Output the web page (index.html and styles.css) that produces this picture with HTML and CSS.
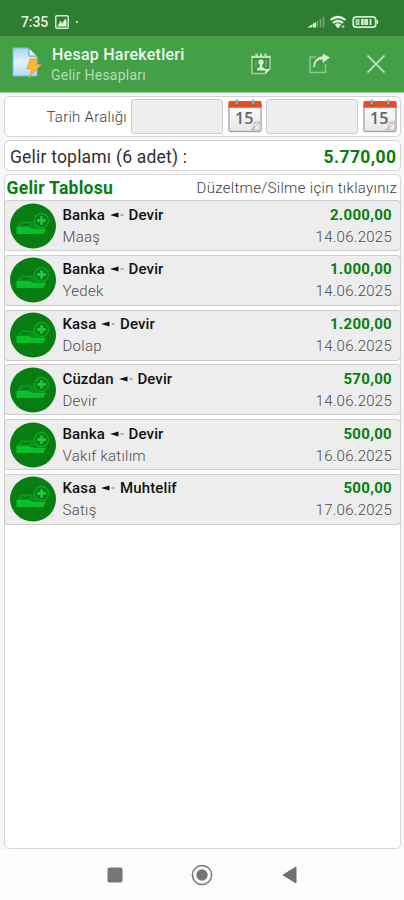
FILE: index.html
```
<!DOCTYPE html>
<html lang="tr">
<head>
<meta charset="utf-8">
<title>Hesap Hareketleri</title>
<link rel="stylesheet" href="styles.css">
</head>
<body>
<svg class="defs" width="0" height="0" aria-hidden="true">
  <defs>
    <linearGradient id="tray" x1="0" y1="0" x2="1" y2="1"><stop offset="0" stop-color="#0cc62c"/><stop offset="1" stop-color="#0ab82a"/></linearGradient>
    <linearGradient id="paper" x1="0" y1="0" x2="0" y2="1"><stop offset="0" stop-color="#a9d4f0"/><stop offset=".5" stop-color="#e4f2fb"/><stop offset="1" stop-color="#b5daf1"/></linearGradient>
    <linearGradient id="sheet" x1="0" y1="0" x2="0" y2="1"><stop offset="0" stop-color="#ffffff"/><stop offset="1" stop-color="#e6e6e6"/></linearGradient>
    <symbol id="income" viewBox="0 0 46 46">
      <ellipse cx="23" cy="23" rx="23" ry="22.500" fill="#087d12"/>
      <path d="M7.500 24l3.500-5h14l4 5 6 1-2 2H7z" fill="#07921c" stroke="#0aa925" stroke-width=".8"/>
      <path d="M12 21.500h7" stroke="#087017" stroke-width="1.400"/>
      <path d="M6.500 24h12q4 2.500 7 2h10.500L33.500 31H6.500z" fill="url(#tray)"/>
      <circle cx="31.500" cy="17.500" r="7" fill="#087d12" stroke="#12a62a" stroke-width="1.300"/>
      <path d="M31.500 13.200v8.600M27.200 17.500h8.600" stroke="#20c63d" stroke-width="2.800"/>
    </symbol>
    <symbol id="calendar" viewBox="0 0 35 34">
      <rect x="1" y="4" width="33" height="29" rx="1.500" fill="url(#sheet)" stroke="#a5a5a5" stroke-width="1.400"/>
      <path d="M.5 8.500V3q0-1.500 1.500-1.500h31q1.500 0 1.500 1.500v5.500z" fill="#ee4a26"/>
      <circle cx="9" cy="4.500" r="2.600" fill="#b8442c"/><circle cx="26" cy="4.500" r="2.600" fill="#b8442c"/>
      <rect x="7.500" y="0" width="3" height="5.500" rx="1.200" fill="#a4a4a4"/><rect x="24.500" y="0" width="3" height="5.500" rx="1.200" fill="#a4a4a4"/>
      <path d="M23 32.500l3-6V23l7.500-1v10.500z" fill="#cdcdcd"/><path d="M27.500 30.500v-5l4.500-1v6z" fill="#f2f2f2"/><path d="M24 32l9-9" stroke="#b5b5b5" stroke-width="1"/>
    </symbol>
    <symbol id="arrow" viewBox="0 0 14 6"><path d="M0 3L8.500.5v5z" fill="#111"/><path d="M10.500 3h3" stroke="#999" stroke-width="1.400"/></symbol>
  </defs>
</svg>
<div class="status">
  <span class="clock">7:35</span>
  <svg class="picture" width="14" height="14" viewBox="0 0 14 14"><rect x=".8" y=".8" width="12.400" height="12.400" rx="1" fill="none" stroke="#d0eccf" stroke-width="1.500"/><path d="M2.500 11.500l3-6 1.500 3 3.500-5 1 3v5z" fill="#e1f5df"/></svg>
  <i class="dot"></i>
  <svg class="system" width="74" height="16" viewBox="0 0 74 16">
    <g fill="#d4efd0"><path d="M0 13.500L5 10.500v3z"/><path d="M5.500 10L9 8v5.500H5.500z"/></g>
    <path d="M10.500 13.500V7M13.500 13.500V5M16.500 13.500V3" stroke="#76ac76" stroke-width="1.500"/>
    <g fill="none" stroke="#dff3dc" stroke-width="2.200"><path d="M23.500 6q7.500-6 15 0M26 9q5-4 10 0"/><path d="M28.500 11.500q2.500-2 5 0"/></g><circle cx="31" cy="12.500" r="1.500" fill="#dff3dc"/><circle cx="36" cy="12.500" r="1.500" fill="#9dcb9c"/>
    <rect x="46.200" y="2.800" width="22.500" height="10.400" rx="3" fill="none" stroke="#d4edcf" stroke-width="1.700"/><path d="M70 6q2 2 0 4z" fill="#d4edcf" stroke="#d4edcf"/>
    <rect x="48.500" y="5" width="4" height="6" fill="#a9d0a6"/><rect x="54" y="5" width="7" height="6" fill="#cfe9cc"/><path d="M63.500 5v6" stroke="#cfe9cc" stroke-width="2"/><path d="M57 5v6" stroke="#69a56b" stroke-width=".8"/>
  </svg>
</div>
<header class="appbar">
  <svg class="doc" width="30" height="32" viewBox="0 0 30 32">
    <path d="M1 1h16l8 8v20H1z" fill="url(#paper)" stroke="#79b7dd" stroke-width="1"/>
    <path d="M17 1v8h8z" fill="#eef8fd" stroke="#4e9ac8" stroke-width="1"/>
    <path d="M18 12h8l-3 5.500h6L16.500 31l4-9H15z" fill="#f9b934" stroke="#dda03a" stroke-width=".8"/>
  </svg>
  <div class="titles"><h1>Hesap Hareketleri</h1><p>Gelir Hesapları</p></div>
  <nav class="actions">
    <svg width="22" height="24" viewBox="0 0 22 24"><path d="M2 4.500h18v12l-5 5H2z" fill="#35953a" stroke="#a2d09b" stroke-width="1.600"/><path d="M1.500 5h19M6.500 1.500v4M11 1.500v4M15.500 1.500v4" stroke="#c3e4bb" stroke-width="2"/><path d="M15 22v-5h5.500z" fill="#d9f2d1"/><circle cx="11" cy="10" r="2.700" fill="#d9f2d1"/><path d="M9.700 11h2.600v4l2.700 1.500v2H7v-2l2.700-1.500z" fill="#d9f2d1"/><path d="M6 8v7M16 8v7" stroke="#8bc486" stroke-width="1"/></svg>
    <svg width="22" height="22" viewBox="0 0 22 22"><path d="M8 4H2v15.500h15.500V11" fill="none" stroke="#91c78c" stroke-width="1.500"/><path d="M6.500 14Q7 6 15 6v3.500l6.500-5L15 1v2.500Q6 4 5.500 14z" fill="#d6f0ce" stroke="#d6f0ce" stroke-width=".6"/></svg>
    <svg width="20" height="20" viewBox="0 0 20 20"><path d="M1.500 1.500l17 17M18.500 1.500l-17 17" stroke="#cdebc5" stroke-width="1.700"/></svg>
  </nav>
</header>
<main>
  <section class="card range">
    <label>Tarih Aralığı</label>
    <div class="field"></div>
    <div class="cal"><svg width="34" height="34"><use href="#calendar"/></svg><b>15</b></div>
    <div class="field"></div>
    <div class="cal"><svg width="34" height="34"><use href="#calendar"/></svg><b>15</b></div>
  </section>
  <section class="card total"><span class="total-label">Gelir toplamı (6 adet) :</span><strong>5.770,00</strong></section>
  <section class="card list">
    <div class="list-head"><h2>Gelir Tablosu</h2><span class="hint">Düzeltme/Silme için tıklayınız</span></div>
    <ul>
      <li><svg class="icon"><use href="#income"/></svg><div class="info"><b>Banka <svg class="arrow"><use href="#arrow"/></svg> Devir</b><span>Maaş</span></div><div class="sum"><b>2.000,00</b><span>14.06.2025</span></div></li>
      <li><svg class="icon"><use href="#income"/></svg><div class="info"><b>Banka <svg class="arrow"><use href="#arrow"/></svg> Devir</b><span>Yedek</span></div><div class="sum"><b>1.000,00</b><span>14.06.2025</span></div></li>
      <li><svg class="icon"><use href="#income"/></svg><div class="info"><b>Kasa <svg class="arrow"><use href="#arrow"/></svg> Devir</b><span>Dolap</span></div><div class="sum"><b>1.200,00</b><span>14.06.2025</span></div></li>
      <li><svg class="icon"><use href="#income"/></svg><div class="info"><b>Cüzdan <svg class="arrow"><use href="#arrow"/></svg> Devir</b><span>Devir</span></div><div class="sum"><b>570,00</b><span>14.06.2025</span></div></li>
      <li><svg class="icon"><use href="#income"/></svg><div class="info"><b>Banka <svg class="arrow"><use href="#arrow"/></svg> Devir</b><span>Vakıf katılım</span></div><div class="sum"><b>500,00</b><span>16.06.2025</span></div></li>
      <li><svg class="icon"><use href="#income"/></svg><div class="info"><b>Kasa <svg class="arrow"><use href="#arrow"/></svg> Muhtelif</b><span>Satış</span></div><div class="sum"><b>500,00</b><span>17.06.2025</span></div></li>
    </ul>
  </section>
</main>
<footer class="keys">
  <svg width="16" height="16" viewBox="0 0 16 16"><rect x=".5" y=".5" width="15" height="15" rx="2" fill="#767676"/></svg>
  <svg width="22" height="22" viewBox="0 0 22 22"><circle cx="11" cy="11" r="9.600" fill="none" stroke="#767676" stroke-width="1.500"/><circle cx="11" cy="11" r="5.700" fill="#767676"/></svg>
  <svg width="15" height="18" viewBox="0 0 15 18"><path d="M1 9L14 1v16z" fill="#707070" stroke="#707070"/></svg>
</footer>
</body>
</html>
```
FILE: styles.css
```
* { box-sizing: border-box; margin: 0; padding: 0; }
body { width: 404px; height: 900px; overflow: hidden; display: flex; flex-direction: column; background: #fdfdfd; font-family: Roboto, sans-serif; }
svg { display: block; flex: none; }
.defs { position: absolute; }
.status { height: 36px; background: #2f7d33; display: flex; align-items: center; padding: 8px 23px 0 21px; color: #e0f4de; flex: none; }
.clock { font-size: 14px; font-weight: 500; width: 34px; letter-spacing: -.1px; }
.dot { width: 2px; height: 2px; background: #b9dcb7; margin-left: 7px; }
.system { margin-left: auto; }
.appbar { height: 57px; background: #43a047; border-bottom: 1px solid #a3d0a3; display: flex; align-items: center; padding: 0 18px 0 12px; flex: none; }
.doc { margin-top: -2px; }
.titles { margin-left: 9px; padding-top: 3px; }
.titles h1 { font-size: 16px; line-height: 20px; font-weight: 500; color: #edfaeb; letter-spacing: .25px; padding-left: 1px; }
.titles p { font-size: 14px; line-height: 21px; color: #b4deaf; letter-spacing: .25px; }
.actions { margin-left: auto; display: flex; align-items: center; gap: 36px; }
main { padding: 3px 3px 0 4px; display: flex; flex-direction: column; gap: 3px; background: #f8f8f8; height: 756px; flex: none; }
.card { background: #fff; border: 1px solid #d4d4d4; border-radius: 5px; }
.range { height: 41px; display: flex; align-items: center; flex: none; }
.range label { width: 122px; text-align: right; font-size: 15px; color: #3c3c3c; font-weight: 300; letter-spacing: .27px; }
.field { width: 92px; height: 35px; background: #eee; border: 1px solid #ccc; border-radius: 3px; margin: 0 5px 0 4px; flex: none; }
.cal { position: relative; width: 34px; height: 34px; margin-top: -1px; flex: none; }
.cal b { position: absolute; left: 7px; top: 9px; font: 600 16px/20px "Open Sans", sans-serif; color: #666; }
.total { height: 31px; display: flex; align-items: center; justify-content: space-between; padding: 2px 4px 0 5px; font-size: 17.500px; color: #303030; flex: none; }
.total-label { letter-spacing: .2px; }
.total strong { color: #087d12; font-weight: 700; letter-spacing: .4px; margin-right: -.4px; }
.list { flex: 1; border-color: #d7d7d7; }
.list-head { height: 25px; display: flex; align-items: center; justify-content: space-between; padding: 0 3px 0 1.500px; }
.list-head h2 { font-size: 17.500px; color: #087d12; font-weight: 700; letter-spacing: .27px; }
.hint { font-size: 15px; color: #3c3c3c; font-weight: 300; letter-spacing: .31px; }
ul { list-style: none; display: grid; gap: 3.800px; margin: 0 -1px; }
li { height: 51px; background: #ededed; border: 1px solid #ccc; border-radius: 4px; display: flex; align-items: center; padding: 0 8px 0 5px; }
.icon { width: 46px; height: 46px; }
.info { margin-left: 6.500px; }
.info b, .sum b { display: block; line-height: 22px; font-size: 15px; }
.info b { font-weight: 500; color: #111; letter-spacing: .12px; }
.info span, .sum span { display: block; line-height: 22px; font-size: 15px; color: #4c4c4c; font-weight: 300; letter-spacing: .27px; }
.arrow { display: inline-block; width: 14px; height: 6px; vertical-align: 2px; margin: 0 1px; }
.sum { margin-left: auto; text-align: right; }
.sum b { color: #087d12; font-weight: 700; letter-spacing: .3px; }
.keys { flex: 1; display: grid; grid-template-columns: repeat(3, 22px); column-gap: 65px; justify-content: center; align-items: center; justify-items: center; padding-top: 0; }
```
